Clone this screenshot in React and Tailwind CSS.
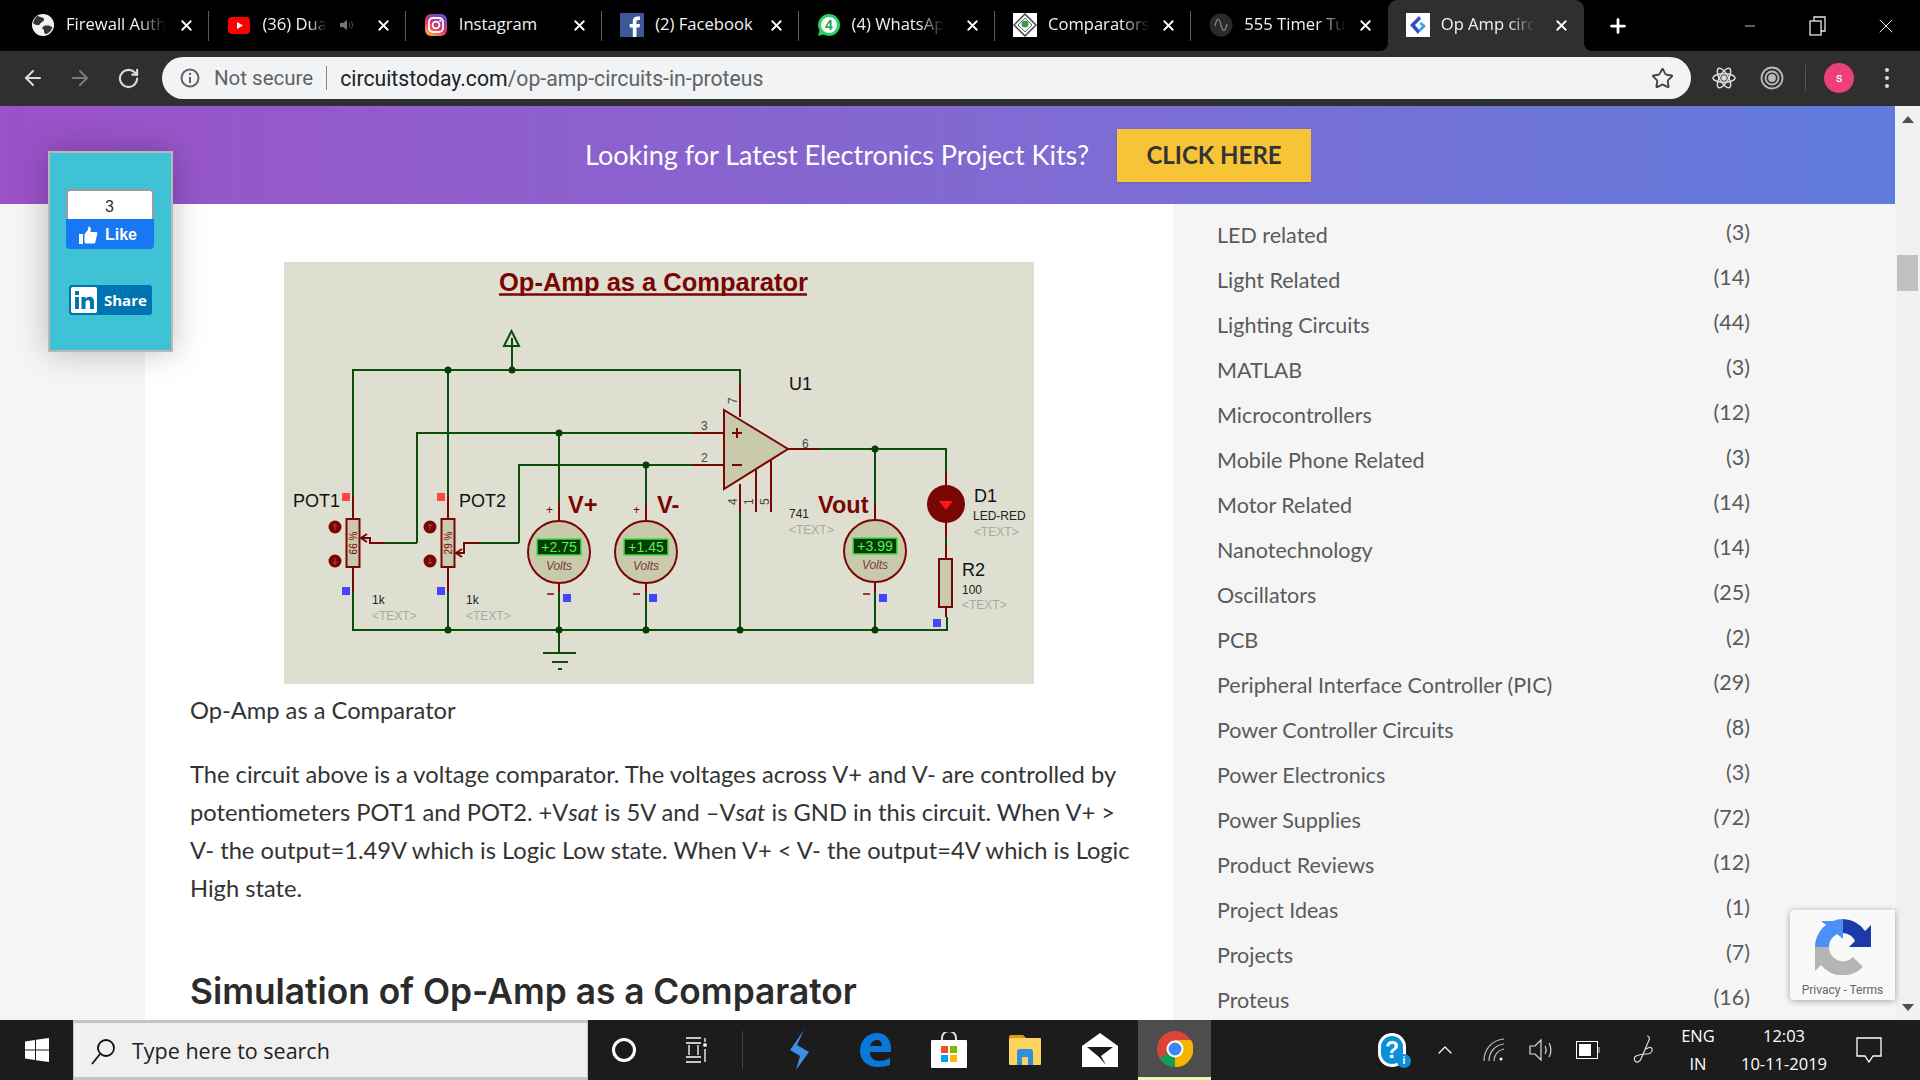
import React from 'react';
import { ArrowLeft, ArrowRight, RotateCw, Star, Plus, X, Minus, ChevronUp } from 'lucide-react';

/* ---- data ---- */
const CATEGORIES = [
  ['LED related', 3], ['Light Related', 14], ['Lighting Circuits', 44], ['MATLAB', 3],
  ['Microcontrollers', 12], ['Mobile Phone Related', 3], ['Motor Related', 14], ['Nanotechnology', 14],
  ['Oscillators', 25], ['PCB', 2], ['Peripheral Interface Controller (PIC)', 29],
  ['Power Controller Circuits', 8], ['Power Electronics', 3], ['Power Supplies', 72],
  ['Product Reviews', 12], ['Project Ideas', 1], ['Projects', 7], ['Proteus', 16],
];

/* ---- favicons ---- */
const GlobeIcon = () => (
  <svg width="24" height="24" viewBox="0 0 24 24">
    <circle cx="12" cy="12" r="11" fill="#f1f1f1" />
    <path d="M6 3c3 1 6 1 7 3s-3 3-4 5-4 1-6 0 1-6 3-8zM13 13c3-1 7 0 8 1s-3 7-6 7-1-4-3-5 0-2 1-3z" fill="#333" />
  </svg>
);
const YoutubeIcon = () => (
  <svg width="24" height="24" viewBox="0 0 24 24">
    <rect x="1" y="4" width="22" height="17" rx="4" fill="#f00" />
    <path d="M10 9l6 3.5-6 3.5z" fill="#fff" />
  </svg>
);
const InstagramIcon = () => (
  <svg width="24" height="24" viewBox="0 0 24 24">
    <defs>
      <linearGradient id="ig" x1="0.2" y1="1" x2="0.8" y2="0">
        <stop offset="0" stopColor="#fdb140" />
        <stop offset="0.45" stopColor="#e1306c" />
        <stop offset="1" stopColor="#5b51d8" />
      </linearGradient>
    </defs>
    <rect x="1" y="1" width="22" height="22" rx="6" fill="url(#ig)" />
    <rect x="5" y="5" width="14" height="14" rx="4" fill="none" stroke="#fff" strokeWidth="1.8" />
    <circle cx="12" cy="12" r="3.4" fill="none" stroke="#fff" strokeWidth="1.8" />
    <circle cx="16.2" cy="7.8" r="1" fill="#fff" />
  </svg>
);
const FacebookIcon = () => (
  <svg width="24" height="24" viewBox="0 0 24 24">
    <rect width="24" height="24" fill="#3b5998" />
    <path d="M16.5 24v-9.5h3l.5-3.6h-3.500V8.700c0-1 .3-1.800 1.800-1.800H20V3.600C19.600 3.500 18.500 3.400 17.300 3.400c-2.700 0-4.500 1.600-4.500 4.600v2.900H9.700v3.600h3.100V24z" fill="#fff" />
  </svg>
);
const WhatsappIcon = () => (
  <svg width="24" height="24" viewBox="0 0 24 24">
    <path d="M12 1a11 11 0 0 1 0 22c-2 0-3.700-.5-5.300-1.400L1 23l1.500-5.500A11 11 0 0 1 12 1z" fill="#25d366" />
    <circle cx="12" cy="12" r="8" fill="#fff" />
    <text x="12" y="17" textAnchor="middle" fontSize="14" fontWeight="700" fill="#25a04f" fontFamily="Liberation Sans, sans-serif">4</text>
  </svg>
);
const ComparatorIcon = () => (
  <svg width="24" height="24" viewBox="0 0 24 24">
    <rect width="24" height="24" fill="#fff" />
    <path d="M12 1l11 11-11 11L1 12z" fill="none" stroke="#444" strokeWidth="1.500" />
    <path d="M12 5l7 7-7 7-7-7z" fill="none" stroke="#666" strokeWidth="1" />
    <circle cx="12" cy="11" r="3.500" fill="#3c9a50" />
  </svg>
);
const TimerIcon = () => (
  <svg width="24" height="24" viewBox="0 0 24 24">
    <circle cx="12" cy="12" r="11.500" fill="#2a2a2a" />
    <path d="M6 13c2-9 4-9 6-1s4 7 6-1" fill="none" stroke="#888" strokeWidth="1.200" />
  </svg>
);
const CircuitsTodayIcon = () => (
  <svg width="24" height="24" viewBox="0 0 24 24">
    <rect width="24" height="24" fill="#fff" />
    <path d="M13 3L4 12l8 9 2-3-5-6 6-6z" fill="#2f50c8" />
    <path d="M15 9l5 4-6 6-1.500-2 3.500-4-2.500-2z" fill="#35a8e0" />
  </svg>
);

const TABS = [
  { title: 'Firewall Auth', icon: GlobeIcon, fade: true },
  { title: '(36) Dua', icon: YoutubeIcon, muted: true, fade: true },
  { title: 'Instagram', icon: InstagramIcon },
  { title: '(2) Facebook', icon: FacebookIcon },
  { title: '(4) WhatsAp', icon: WhatsappIcon, fade: true },
  { title: 'Comparators', icon: ComparatorIcon, fade: true },
  { title: '555 Timer Tu', icon: TimerIcon, fade: true },
  { title: 'Op Amp circ', icon: CircuitsTodayIcon, active: true, fade: true },
];

function Tab({ title, icon: Icon, muted, active, last, fade }) {
  return (
    <div className={`relative flex h-full w-[196.400px] items-center pb-[2px] pl-[18px] ${active ? 'rounded-t-[9px] bg-[#2f2f2f]' : ''}`}>
      {active && (
        <>
          <svg className="absolute bottom-0 left-[-8px]" width="8" height="8"><path d="M8 0V8H0A8 8 0 0 0 8 0z" fill="#2f2f2f" /></svg>
          <svg className="absolute bottom-0 right-[-8px]" width="8" height="8"><path d="M0 0V8H8A8 8 0 0 1 0 0z" fill="#2f2f2f" /></svg>
        </>
      )}
      <div className="flex w-[24px] shrink-0 justify-center"><Icon /></div>
      <div className={`ml-[11px] w-fit whitespace-nowrap font-['Open_Sans',sans-serif] text-[16.600px] text-[#f1f3f4] ${fade ? '[mask-image:linear-gradient(to_right,black_72%,transparent)]' : ''}`}>
        {title}
      </div>
      {muted && (
        <svg className="ml-[12px]" width="16" height="16" viewBox="0 0 16 16">
          <path d="M1 6h3l4-3v10l-4-3H1z" fill="#777" />
          <path d="M10 6c1 1 1 3 0 4M12 4.500c2 2 2 5 0 7" fill="none" stroke="#555" strokeWidth="1" />
        </svg>
      )}
      <X className="absolute right-[14px] top-[17px] text-white" size={17} strokeWidth={2.6} />
      {!active && !last && <div className="absolute right-0 top-[11px] h-[30px] w-px bg-[#5c5c5c]" />}
    </div>
  );
}

function TabStrip() {
  return (
    <div className="flex h-[51px] shrink-0 items-stretch bg-black pl-[13px]">
      {TABS.map((t, i) => (
        <Tab key={t.title} {...t} last={i === TABS.length - 2} />
      ))}
      <div className="flex w-[66px] items-center justify-center pl-[2px]">
        <Plus className="text-white" size={22} strokeWidth={3} />
      </div>
      <div className="ml-auto flex h-full items-center text-[#e8e8e8]">
        <div className="flex w-[68px] justify-center"><Minus size={16} strokeWidth={1.2} /></div>
        <div className="flex w-[68px] justify-center">
          <svg width="18" height="22" viewBox="0 0 18 22" fill="none" stroke="currentColor" strokeWidth="1.300">
            <rect x="1" y="6" width="11" height="14" />
            <path d="M5 6V2h11v14h-4" />
          </svg>
        </div>
        <div className="flex w-[68px] justify-center"><X size={24} strokeWidth={1} /></div>
      </div>
    </div>
  );
}

function AddressBar() {
  return (
    <div className="flex h-[55px] shrink-0 items-center bg-[#2f2f2f] pb-[1px]">
      <div className="flex w-[162px] items-center pl-[21px] text-[#dadce0]">
        <ArrowLeft size={24} strokeWidth={2} />
        <ArrowRight className="ml-[23px] text-[#7b7b7b]" size={24} strokeWidth={2} />
        <RotateCw className="ml-[25px]" size={23} strokeWidth={2.2} />
      </div>
      <div className="flex h-[42px] w-[1529px] items-center rounded-full bg-[#f1f3f4] pl-[18px] pr-[17px] font-['Roboto',sans-serif] text-[20.500px]">
        <svg width="20" height="20" viewBox="0 0 20 20" fill="none" stroke="#5f6368" strokeWidth="2">
          <circle cx="10" cy="10" r="8.500" />
          <path d="M10 9v6M10 5v2" />
        </svg>
        <span className="ml-[14px] pt-[1px] text-[#5f6368]">Not secure</span>
        <div className="ml-[13px] h-[24px] w-px bg-[#80868b]" />
        <span className="ml-[13px] pt-[1px] text-[21.200px] text-[#202124]">circuitstoday.com<span className="text-[#5f6368]">/op-amp-circuits-in-proteus</span></span>
        <Star className="ml-auto text-[#444]" size={23} strokeWidth={2} />
      </div>
      <div className="flex flex-1 items-center pl-[21px] text-[#ddd]">
        <svg width="24" height="24" viewBox="0 0 24 24" fill="none" stroke="currentColor" strokeWidth="1.500">
          <ellipse cx="12" cy="12" rx="11" ry="4.300" />
          <ellipse cx="12" cy="12" rx="11" ry="4.300" transform="rotate(60 12 12)" />
          <ellipse cx="12" cy="12" rx="11" ry="4.300" transform="rotate(120 12 12)" />
          <circle cx="12" cy="12" r="2" fill="currentColor" />
        </svg>
        <svg className="ml-[24px]" width="24" height="26" viewBox="0 0 24 26" fill="none" stroke="#bbb" strokeWidth="1.800">
          <circle cx="12" cy="13" r="10.500" />
          <circle cx="12" cy="13" r="6.500" />
          <circle cx="12" cy="13" r="3" fill="#bbb" />
        </svg>
        <div className="ml-[21px] h-[26px] w-px bg-[#555]" />
        <div className="ml-[18px] flex h-[30px] w-[30px] items-center justify-center rounded-full bg-[#ec407a] font-['Roboto',sans-serif] text-[13px] text-white">s</div>
        <div className="ml-[31px] flex flex-col gap-[4px]">
          <div className="h-[4px] w-[4px] rounded-full bg-[#ddd]" />
          <div className="h-[4px] w-[4px] rounded-full bg-[#ddd]" />
          <div className="h-[4px] w-[4px] rounded-full bg-[#ddd]" />
        </div>
      </div>
    </div>
  );
}

/* ---- schematic picture ---- */
const GREEN = '#0c4d0c';
const RED = '#7a0505';
const BODY = '#c9c9ab';

const Wire = ({ d }) => <path d={d} fill="none" stroke={GREEN} strokeWidth="2" />;
const Lead = ({ d }) => <path d={d} fill="none" stroke={RED} strokeWidth="2" />;
const Node = ({ x, y }) => <circle cx={x} cy={y} r="3.500" fill="#063f06" />;
const Sq = ({ x, y, c = '#4545ff' }) => <rect x={x} y={y} width="8" height="8" fill={c} />;
const Label = ({ x, y, size = 12, fill = '#222', children, ...rest }) => (
  <text x={x} y={y} fontSize={size} fill={fill} {...rest}>{children}</text>
);
const Muted = ({ x, y }) => <Label x={x} y={y} fill="#a8a8a0">{'<TEXT>'}</Label>;

function Meter({ x, y, value }) {
  return (
    <g>
      <circle cx={x} cy={y} r="31" fill={BODY} stroke={RED} strokeWidth="2" />
      <rect x={x - 22} y={y - 13} width="44" height="16" fill="#043c04" stroke="#45e045" strokeWidth="1.500" />
      <text x={x} y={y} fontSize="14" textAnchor="middle" fill="#58f058">{value}</text>
      <text x={x} y={y + 18} fontSize="12" fontStyle="italic" textAnchor="middle" fill="#7a3a3a">Volts</text>
    </g>
  );
}

function Pot({ x, value, wiper }) {
  return (
    <g>
      <Lead d={`M${x} 235V257M${x} 305V329`} />
      <rect x={x - 6.500} y="257" width="13" height="48" fill={BODY} stroke={RED} strokeWidth="2" />
      <text transform={`translate(${x + 4} 281) rotate(-90)`} fontSize="10" textAnchor="middle" fill={RED}>{value}</text>
      <Lead d={wiper} />
      <circle cx={x - 18} cy="265" r="6.500" fill={RED} />
      <path d={`M${x - 18} 268V262M${x - 20} 264L${x - 18} 262L${x - 16} 264`} fill="none" stroke="#a84a4a" strokeWidth="1" />
      <circle cx={x - 18} cy="299" r="6.500" fill={RED} />
      <path d={`M${x - 18} 296V302M${x - 20} 300L${x - 18} 302L${x - 16} 300`} fill="none" stroke="#a84a4a" strokeWidth="1" />
      <Sq x={x - 11} y="231" c="#ff4545" />
      <Sq x={x - 11} y="325" />
    </g>
  );
}

function Schematic() {
  return (
    <svg className="block h-[422px] w-[750px] bg-[#dfdfd1]" viewBox="0 0 750 422" fontFamily="Liberation Sans, sans-serif">
      <text x="215" y="29" fontSize="25.500" fontWeight="700" fill={RED}>Op-Amp as a Comparator</text>
      <path d="M215 32.500H523" stroke={RED} strokeWidth="2.500" />

      {/* wires */}
      <Wire d="M228 108V76M220 84H235L227.500 69zM69 235V108H456V123M164 108V235M133 281V171H409M101 281H133M235 281V203H409M196 281H235" />
      <Wire d="M69 329V368H663V355M164 329V368M275 171V241M275 330V391M259 391H292M268 400H284M274 407H278M362 203V241M362 330V368" />
      <Wire d="M456 250V368M535 187H662V211M591 187V241M591 330V368M662 276V283" />
      {[[164, 108], [228, 108], [275, 171], [362, 203], [591, 187], [164, 368], [275, 368], [362, 368], [456, 368], [591, 368]].map(([x, y]) => (
        <Node key={`${x}-${y}`} x={x} y={y} />
      ))}

      {/* pots */}
      <Pot x={69} value="66 %" wiper="M101 281H86V276H77M83 272L77 276L83 280" />
      <Pot x={164} value="29 %" wiper="M196 281H180V291H172M178 287L172 291L178 295" />
      <Label x={9} y={245} size={18} fill="#111">POT1</Label>
      <Label x={175} y={245} size={18} fill="#111">POT2</Label>
      <Label x={88} y={342}>1k</Label>
      <Muted x={88} y={358} />
      <Label x={182} y={342}>1k</Label>
      <Muted x={182} y={358} />

      {/* op amp */}
      <Lead d="M456 123V155M409 171H440M409 203H440M504 187H535M456 222V250M472 208V250M487 198V250" />
      <path d="M440 148L504 187L440 227z" fill={BODY} stroke={RED} strokeWidth="2" />
      <path d="M448 171H458M453 166V176M448 203H458" stroke={RED} strokeWidth="2" />
      <Label x={505} y={128} size={18} fill="#111">U1</Label>
      <Label x={417} y={168} size={12} fill="#444">3</Label>
      <Label x={417} y={200} size={12} fill="#444">2</Label>
      <Label x={518} y={186} size={12} fill="#444">6</Label>
      <Label transform="translate(453 142) rotate(-90)" x={0} y={0} fill="#444">7</Label>
      <Label transform="translate(453 243) rotate(-90)" x={0} y={0} fill="#444">4</Label>
      <Label transform="translate(469 243) rotate(-90)" x={0} y={0} fill="#444">1</Label>
      <Label transform="translate(485 243) rotate(-90)" x={0} y={0} fill="#444">5</Label>
      <Label x={505} y={256}>741</Label>
      <Muted x={505} y={272} />

      {/* meters */}
      <Lead d="M275 241V258M275 322V330M362 241V258M362 322V330M591 241V258M591 321V330" />
      <Meter x={275} y={290} value="+2.75" />
      <Meter x={362} y={290} value="+1.45" />
      <Meter x={591} y={289} value="+3.99" />
      <Label x={284} y={251} size={23.500} fontWeight="700" fill={RED}>V+</Label>
      <Label x={373} y={251} size={23.500} fontWeight="700" fill={RED}>V-</Label>
      <Label x={534} y={251} size={23.500} fontWeight="700" fill={RED}>Vout</Label>
      <Label x={262} y={252} fill={RED}>+</Label>
      <Label x={349} y={252} fill={RED}>+</Label>
      <path d="M263 332H270M349 332H356M579 332H586" stroke={RED} strokeWidth="1.500" />
      <Sq x={279} y={332} />
      <Sq x={365} y={332} />
      <Sq x={595} y={332} />

      {/* led + resistor */}
      <Lead d="M662 211V225M662 260V276M662 283V297M662 345V355" />
      <circle cx="662" cy="242" r="19" fill={RED} />
      <path d="M655 239H669L662 248z" fill="#ff1818" />
      <rect x="655" y="297" width="13" height="48" fill={BODY} stroke={RED} strokeWidth="2" />
      <Sq x={649} y={357} />
      <Label x={690} y={240} size={18} fill="#111">D1</Label>
      <Label x={689} y={258}>LED-RED</Label>
      <Muted x={690} y={274} />
      <Label x={678} y={314} size={18} fill="#111">R2</Label>
      <Label x={678} y={332}>100</Label>
      <Muted x={678} y={347} />
    </svg>
  );
}

/* ---- floating widgets ---- */
function ShareWidget() {
  return (
    <div className="absolute left-[48px] top-[45px] z-10 flex h-[201px] w-[125px] flex-col items-center border-2 border-[#b8b8b8] bg-[#3fc1d6] pt-[36px] shadow-[0_0_30px_rgba(0,0,0,0.25)]">
      <div className="-ml-[2px] flex h-[30px] w-[88px] items-center justify-center rounded-t-[4px] border-x-2 border-t-2 border-[#9a9aa0] bg-white pt-[3px] font-['Liberation_Sans',sans-serif] text-[16px] text-[#333]">3</div>
      <div className="-ml-[2px] flex h-[30px] w-[88px] items-center justify-center gap-[7px] rounded-b-[4px] bg-[#1877f2] pr-[4px] pt-[1px] font-['Liberation_Sans',sans-serif] text-[16px] font-bold text-white">
        <svg width="20" height="20" viewBox="0 0 20 20" fill="#fff">
          <path d="M1 9h4v10H1zM6.500 9l3-3.500c.7-1 .8-2.500.8-4 1.700-.3 2.800 1.300 2.600 3.200L12.300 7H18c1 0 1.600 1 1.300 1.800l-2 8.500c-.2.800-.8 1.200-1.600 1.200H9c-1 0-1.600-.5-2.500-1z" />
        </svg>
        Like
      </div>
      <div className="mt-[36px] flex h-[30px] w-[83px] items-center rounded-[3px] bg-[#0073b1] pl-[2px] font-['Open_Sans',sans-serif] text-[15px] font-bold text-white">
        <svg width="26" height="26" viewBox="0 0 26 26">
          <rect width="26" height="26" rx="2" fill="#fff" />
          <path d="M4 10h4v12H4zM4 4h4v4H4zM10.500 10h4v2c1-1.500 2.300-2.300 4-2.300 3.200 0 4.500 2 4.500 5.300v7h-4v-6.300c0-1.700-.6-2.700-2-2.700s-2.500 1-2.500 2.900V22h-4z" fill="#0073b1" />
        </svg>
        <span className="ml-[7px]">Share</span>
      </div>
    </div>
  );
}

function RecaptchaBadge() {
  return (
    <div className="absolute bottom-[20px] right-[25px] flex h-[90px] w-[105px] flex-col items-center rounded-l-[4px] bg-[#f9f9f9] pt-[9px] font-['Roboto',sans-serif] text-[12px] text-[#666] shadow-[0_1px_6px_rgba(0,0,0,0.35)]">
      <svg width="56" height="56" viewBox="0 0 56 56">
        <path d="M0 28A28 28 0 0 1 28 0V14A14 14 0 0 0 14 28z" fill="#4a90f5" />
        <path d="M6 2L28 2V20L14 8z" fill="#4a90f5" />
        <path d="M28 0A28 28 0 0 1 50 12L56 6V28H34L40 22A14 14 0 0 0 28 14z" fill="#1c3aa9" />
        <path d="M0 28H14A14 14 0 0 0 38 38L48 48A28 28 0 0 1 6 46L0 52z" fill="#b5b5b5" />
      </svg>
      <div className="mt-[6px] whitespace-nowrap">Privacy - Terms</div>
    </div>
  );
}

function PageContent() {
  return (
    <div className="relative flex min-h-0 min-w-0 flex-1 overflow-hidden">
      <div className="flex w-[1895px] shrink-0 flex-col bg-[#f5f5f5]">
        {/* ---- promo banner ---- */}
        <div className="flex h-[98px] shrink-0 items-center bg-linear-to-r from-[#9b51c8] to-[#5f7cdc] pl-[585px] font-['Lato',sans-serif]">
          <span className="text-[27px] text-white">Looking for Latest Electronics Project Kits?</span>
          <div className="ml-[28px] flex h-[53px] w-[194px] items-center justify-center bg-[#f8c437] text-[24px] font-bold text-[#333] shadow-sm">CLICK HERE</div>
        </div>

        <div className="flex min-h-0 flex-1">
          <div className="w-[145px] shrink-0" />
          {/* ---- article ---- */}
          <div className="w-[1028px] shrink-0 bg-white pl-[45px] pt-[58px] font-['Lato',sans-serif] text-[23.700px] leading-[38px] text-[#333]">
            <div className="ml-[94px]"><Schematic /></div>
            <p className="mt-[7px]">Op-Amp as a Comparator</p>
            <p className="mt-[26px] w-[940px]">
              The circuit above is a voltage comparator. The voltages across V+ and V- are controlled by potentiometers POT1 and POT2. +V<i>sat</i> is 5V and –V<i>sat</i> is GND in this circuit. When V+ &gt; V- the output=1.49V which is Logic Low state. When V+ &lt; V- the output=4V which is Logic High state.
            </p>
            <h2 className="mt-[61px] whitespace-nowrap font-['Inter',sans-serif] text-[35.300px] font-semibold leading-[48px] text-[#2b2b2b]">Simulation of Op-Amp as a Comparator</h2>
          </div>
          {/* ---- sidebar ---- */}
          <div className="flex-1 pl-[44px] pt-[9px] font-['Lato',sans-serif] text-[21.500px] text-[#5a5a5a]">
            {CATEGORIES.map(([name, count]) => (
              <div key={name} className="flex h-[45px] w-[533px] items-center justify-between">
                <span>{name}</span>
                <span className="pb-[6px]">({count})</span>
              </div>
            ))}
          </div>
        </div>
      </div>

      {/* ---- scrollbar ---- */}
      <div className="flex w-[25px] flex-col items-center bg-[#f1f1f1] pt-[10px] pb-[9px]">
        <div className="h-0 w-0 border-x-[6px] border-b-[7px] border-x-transparent border-b-[#505050]" />
        <div className="mt-[132px] h-[36px] w-[21px] bg-[#c1c1c1]" />
        <div className="mt-auto h-0 w-0 border-x-[6px] border-t-[7px] border-x-transparent border-t-[#505050]" />
      </div>

      <ShareWidget />
      <RecaptchaBadge />
    </div>
  );
}

/* ---- taskbar ---- */
function Taskbar() {
  return (
    <div className="flex h-[60px] shrink-0 items-center bg-[#1c1c1c] text-white">
      <div className="flex w-[73px] justify-center">
        <svg width="24" height="24" viewBox="0 0 24 24" fill="#fff">
          <path d="M0 3.500L10 2v9.500H0zM11 1.800L24 0v11.500H11zM0 12.500h10V22L0 20.500zM11 12.500h13V24l-13-1.800z" />
        </svg>
      </div>
      <div className="flex h-full w-[515px] items-center border-y-[3px] border-x border-[#c4c4c4] bg-[#f0f0f0] pl-[16px] pt-[3px] font-['Open_Sans',sans-serif] text-[21.500px] text-[#222]">
        <svg width="26" height="30" viewBox="0 0 26 30" fill="none" stroke="#111" strokeWidth="1.800">
          <circle cx="16" cy="11" r="8" />
          <path d="M10 17L2 27" />
        </svg>
        <span className="ml-[16px]">Type here to search</span>
      </div>
      <div className="w-[24px] shrink-0" />
      <div className="h-[24px] w-[24px] rounded-full border-[3.500px] border-white" />
      <svg className="ml-[47px]" width="24" height="26" viewBox="0 0 24 26" fill="none" stroke="#fff" strokeWidth="1.300">
        <path d="M3 1H18M3 6H18M3 20H18M3 25H18M6 8V18M15 8V18M22 1V5M22 12V25" />
        <rect x="21" y="7" width="2" height="2" fill="#fff" />
      </svg>
      <div className="ml-[35px] h-[38px] w-px bg-[#444]" />
      <svg className="ml-[45px]" width="22" height="40" viewBox="0 0 22 40">
        <path d="M16 0L2 20L12 26L8 40L21 22L9 15z" fill="#3d8ee8" />
      </svg>
      <svg className="ml-[50px]" width="32" height="34" viewBox="0 0 32 34">
        <path d="M31 19H10c0 6 4 9 9 9 4 0 8-1 11-3v7c-3 1-7 2-12 2C7 34 0 27 0 18 0 8 7 0 17 0c9 0 15 7 14 19zM22 13c0-4-2-6-5-6s-6 2-7 6z" fill="#0a78d7" />
      </svg>
      <svg className="ml-[39px]" width="36" height="36" viewBox="0 0 36 36">
        <path d="M11 9V6a7 7 0 0 1 14 0v3" fill="none" stroke="#ddd" strokeWidth="2" />
        <rect y="8" width="36" height="28" rx="1" fill="#fff" />
        <rect x="10" y="14" width="7" height="7" fill="#f25022" />
        <rect x="19" y="14" width="7" height="7" fill="#7fba00" />
        <rect x="10" y="23" width="7" height="7" fill="#00a4ef" />
        <rect x="19" y="23" width="7" height="7" fill="#ffb900" />
      </svg>
      <svg className="ml-[42px]" width="32" height="30" viewBox="0 0 32 30">
        <path d="M0 2a2 2 0 0 1 2-2h12l3 3h-17z" fill="#e09a10" />
        <rect y="3" width="32" height="27" rx="1" fill="#fbd35e" />
        <path d="M8 30V17a3 3 0 0 1 3-3h10a3 3 0 0 1 3 3v13h-5v-8h-6v8z" fill="#2f8fdc" />
      </svg>
      <svg className="ml-[41px]" width="36" height="34" viewBox="0 0 36 34">
        <path d="M18 0L36 13V34H0V13z" fill="#fff" />
        <path d="M5 14H31L19 23l5 9-7-8z" fill="#1c1c1c" />
      </svg>
      <div className="ml-[20px] flex h-full w-[73px] items-center justify-center border-b-[3px] border-[#e6fab4] bg-[#4d4d4d]">
        <svg width="36" height="36" viewBox="0 0 36 36">
          <circle cx="18" cy="18" r="18" fill="#db4437" />
          <path d="M18 18L2.500 27A18 18 0 0 0 18 36l9-9z" fill="#0f9d58" />
          <path d="M18 9H34A18 18 0 0 1 18 36z" fill="#f4b400" />
          <circle cx="18" cy="18" r="8.500" fill="#fff" />
          <circle cx="18" cy="18" r="6.500" fill="#4285f4" />
        </svg>
      </div>

      {/* ---- system tray ---- */}
      <div className="relative ml-[167px] flex h-[34px] w-[28px] items-center justify-center rounded-full border-[3px] border-white bg-[#0a8fd8] font-['Liberation_Sans',sans-serif] text-[23px] font-bold">
        ?
        <div className="absolute bottom-[-4px] right-[-8px] flex h-[14px] w-[14px] items-center justify-center rounded-full bg-[#0a8fd8] text-[10px] leading-none">i</div>
      </div>
      <ChevronUp className="ml-[27px]" size={24} strokeWidth={1.200} />
      <svg className="ml-[26px]" width="22" height="24" viewBox="0 0 22 24" fill="none" stroke="#bbb" strokeWidth="1.200">
        <path d="M1 23C1 11 9 2 21 1M6 23C6 14 12 7 21 6M11 23C11 17 15 12 21 11" />
        <circle cx="18" cy="21" r="1.500" fill="#fff" stroke="none" />
      </svg>
      <svg className="ml-[24px]" width="24" height="26" viewBox="0 0 24 26" fill="none" stroke="#ddd" strokeWidth="1.200">
        <path d="M1 9H6L12 3V23L6 17H1z" />
        <path d="M16 9c1.500 2 1.500 6 0 8M20 6c2.500 4 2.500 10 0 14" />
      </svg>
      <svg className="ml-[23px]" width="24" height="18" viewBox="0 0 24 18">
        <rect x="0.500" y="0.500" width="21" height="17" fill="none" stroke="#fff" />
        <rect x="3" y="3" width="12" height="12" fill="#fff" />
        <rect x="22" y="6" width="2" height="6" fill="#777" />
      </svg>
      <svg className="ml-[32px]" width="24" height="30" viewBox="0 0 24 30" fill="none" stroke="#ddd" strokeWidth="1.200">
        <path d="M15 1c2 0 3 2 2 4L9 24c-1 3-5 4-6 2s-1-4 1-5 6-2 10-2 7-2 6-5-4-1-6 0" />
      </svg>
      <div className="ml-[12px] flex h-full w-[60px] flex-col items-center justify-center gap-[6px] font-['Open_Sans',sans-serif] text-[16.500px] leading-[22px]">
        <span>ENG</span>
        <span>IN</span>
      </div>
      <div className="ml-[4px] flex h-full w-[104px] flex-col items-center justify-center gap-[6px] font-['Open_Sans',sans-serif] text-[16.500px] leading-[22px]">
        <span>12:03</span>
        <span>10-11-2019</span>
      </div>
      <svg className="ml-[20px]" width="26" height="26" viewBox="0 0 26 26" fill="none" stroke="#fff" strokeWidth="1.300">
        <path d="M1 1H25V19H17L13 25L9 19H1z" />
      </svg>
    </div>
  );
}

export default function App() {
  return (
    <div className="flex h-screen w-full flex-col overflow-hidden bg-white">
      <TabStrip />
      <AddressBar />
      <PageContent />
      <Taskbar />
    </div>
  );
}
